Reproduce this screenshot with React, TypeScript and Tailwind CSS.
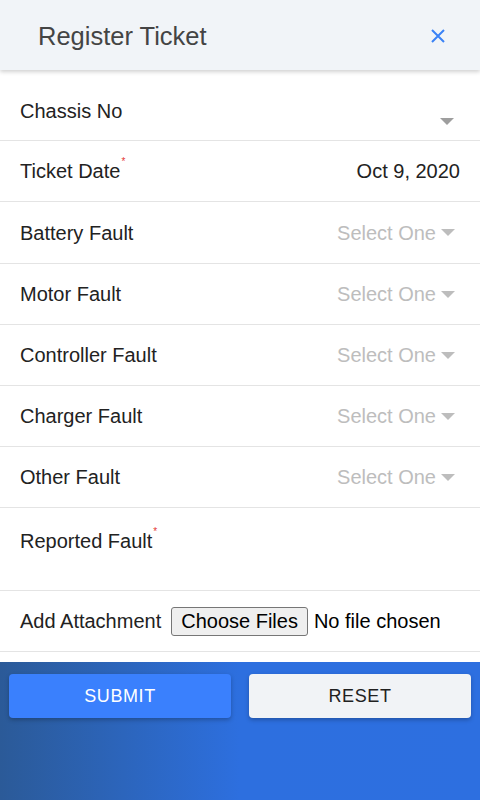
import React from 'react';

const faults = ['Battery Fault', 'Motor Fault', 'Controller Fault', 'Charger Fault', 'Other Fault'];

function Caret({ className = '' }: { className?: string }) {
  return (
    <svg width="14" height="7" viewBox="0 0 14 7" className={className}>
      <path d="M0 0h14L7 7z" fill="currentColor" />
    </svg>
  );
}

function Required() {
  return <span className="self-start mt-[1px] ml-[1px] text-[10px] leading-none text-[#e53935]">*</span>;
}

export default function App() {
  return (
    <div className="w-[480px] h-[800px] flex flex-col bg-white text-[#222] font-['Liberation_Sans',Arial,sans-serif] overflow-hidden">
      {/* Header */}
      <div className="h-[70px] shrink-0 flex items-center justify-between pl-[38px] pr-[35px] pt-[2px] bg-[#f1f4f8] shadow-[0_2px_4px_rgba(0,0,0,0.18)] relative z-10">
        <h1 className="text-[25.5px] text-[#444] font-normal">Register Ticket</h1>
        <svg width="14" height="14" viewBox="0 0 14 14" className="text-[#3b82f6]">
          <path d="M1 1l12 12M13 1L1 13" stroke="currentColor" strokeWidth="2" />
        </svg>
      </div>

      {/* Form rows */}
      <div className="flex flex-col">
        <div className="h-[71px] border-b border-[#e4e4e4] px-5 pt-[29px] relative">
          <span className="text-[20px] leading-[24px]">Chassis No</span>
          <Caret className="absolute right-[26px] top-[48px] text-[#9e9e9e]" />
        </div>

        <div className="h-[61px] border-b border-[#e4e4e4] px-5 flex items-center justify-between">
          <span className="flex items-center text-[20px]">
            Ticket Date<Required />
          </span>
          <span className="text-[20px]">Oct 9, 2020</span>
        </div>

        {faults.map((f, i) => (
          <div
            key={f}
            className={`${i === 0 ? 'h-[62px]' : 'h-[61px]'} border-b border-[#e4e4e4] pl-5 pr-[25px] flex items-center justify-between`}
          >
            <span className="text-[20px]">{f}</span>
            <span className="flex items-center gap-[5px] text-[20px] text-[#bdbdbd]">
              Select One
              <Caret className="text-[#bdbdbd]" />
            </span>
          </div>
        ))}

        <div className="h-[83px] border-b border-[#e4e4e4] px-5 pt-[18px]">
          <span className="flex items-center text-[20px]">
            Reported Fault<Required />
          </span>
        </div>

        <div className="h-[61px] border-b border-[#e4e4e4] px-5 flex items-center gap-[10px]">
          <span className="text-[20px]">Add Attachment</span>
          <span className="flex items-center gap-[6px] text-[20px] text-black">
            <span className="h-[29px] px-[9px] flex items-center border border-[#767676] rounded-[3px] bg-[#efefef]">
              Choose Files
            </span>
            No file chosen
          </span>
        </div>
      </div>

      <div className="h-[10px] shrink-0" />

      {/* Footer */}
      <div className="flex-1 bg-gradient-to-r from-[#2b5a98] via-[#2d6fdf] to-[#2d6fe0] pt-[12px] px-[9px]">
        <div className="flex gap-[18px]">
          <button className="flex-1 h-[44px] rounded-[4px] bg-[#3a80fd] text-white text-[18px] tracking-[0.6px] shadow-[0_2px_4px_rgba(0,0,0,0.25)]">
            SUBMIT
          </button>
          <button className="flex-1 h-[44px] rounded-[4px] bg-[#f1f3f6] text-[#212121] text-[18px] tracking-[0.6px] shadow-[0_2px_4px_rgba(0,0,0,0.25)]">
            RESET
          </button>
        </div>
      </div>
    </div>
  );
}
